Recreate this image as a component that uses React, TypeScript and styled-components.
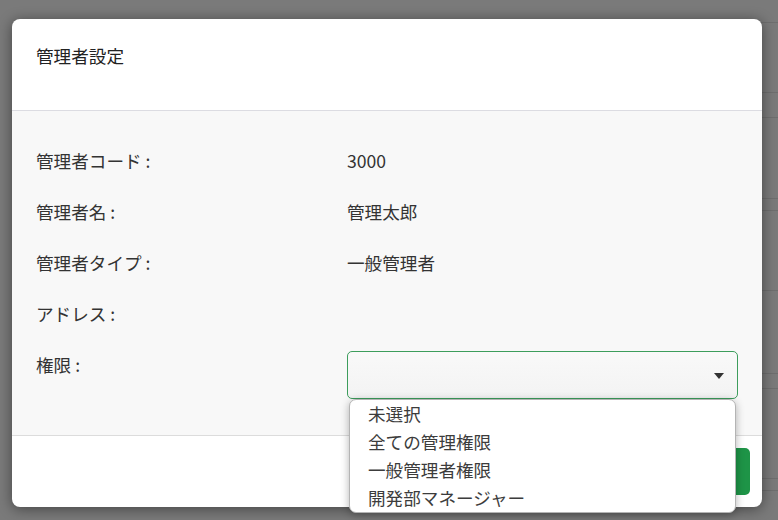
import * as React from "react";
import styled, { createGlobalStyle } from "styled-components";

const GlobalStyle = createGlobalStyle`
  html, body {
    margin: 0;
    padding: 0;
    background: #7a7a7a;
  }
  body {
    font-family: "Noto Sans CJK JP", "Noto Sans", sans-serif;
    color: #333;
  }
`;

const Backdrop = styled.div`
  position: relative;
  width: 778px;
  height: 520px;
  overflow: hidden;
  background: #7a7a7a;
  padding: 19px 16px 0 12px;
  box-sizing: border-box;
`;

// faint table rows of the page behind the overlay
const PageLine = styled.div<{ top: number }>`
  position: absolute;
  left: 700px;
  right: 0;
  top: ${({ top }) => top}px;
  height: 1px;
  background: #6e6e6e;
`;

const Modal = styled.div`
  position: relative;
  width: 750px;
  border-radius: 8px;
  background: #fff;
  box-shadow: 0 2px 14px rgba(0, 0, 0, 0.45);
`;

const Header = styled.div`
  height: 92px;
  padding: 26px 24px 0;
  box-sizing: border-box;
  border-bottom: 1px solid #dcdce2;
  border-radius: 8px 8px 0 0;
  font-size: 17.6px;
  line-height: 22px;
  color: #222;
`;

const Body = styled.div`
  background: #f8f8f8;
  padding: 24px 24px 36px;
  border-bottom: 1px solid #dcdcdc;
`;

const Row = styled.div`
  display: grid;
  grid-template-columns: 311px 1fr;
  align-items: start;
`;

const Label = styled.div`
  font-size: 17.6px;
  line-height: 51px;
  color: #333;
  white-space: pre;
`;

const Value = styled.div`
  font-size: 17.6px;
  line-height: 51px;
  color: #333;
`;

const SelectWrap = styled.div`
  position: relative;
  margin-top: 12px;
`;

const SelectBox = styled.div`
  height: 48px;
  box-sizing: border-box;
  border: 1px solid #3d9d5c;
  border-radius: 5px;
  background: linear-gradient(#f9f9f9, #f3f3f3);
  display: flex;
  align-items: center;
  justify-content: flex-end;
  padding-right: 13px;
`;

const Caret = styled.span`
  width: 0;
  height: 0;
  margin-top: 2px;
  border-left: 5px solid transparent;
  border-right: 5px solid transparent;
  border-top: 6px solid #333;
`;

const Options = styled.ul`
  position: absolute;
  z-index: 2;
  top: 48px;
  left: 2px;
  right: 2px;
  margin: 0;
  padding: 0;
  list-style: none;
  background: #fff;
  border: 1px solid #b4b4b4;
  border-radius: 7px;
  box-shadow: 0 2px 8px rgba(0, 0, 0, 0.3);
`;

const Option = styled.li`
  height: 28px;
  line-height: 28px;
  padding-left: 18px;
  font-size: 17.6px;
  color: #3c3c3c;
`;

const Footer = styled.div`
  height: 71px;
  padding: 12px;
  box-sizing: border-box;
  display: flex;
  justify-content: flex-end;
  border-radius: 0 0 8px 8px;
`;

const SaveButton = styled.button`
  width: 96px;
  height: 47px;
  border: none;
  border-radius: 5px;
  background: #1e9447;
  color: #fff;
  font-family: inherit;
  font-size: 16px;
`;

const fields = [
  { label: "管理者コード :", value: "3000" },
  { label: "管理者名 :", value: "管理太郎" },
  { label: "管理者タイプ :", value: "一般管理者" },
  { label: "アドレス :", value: "" },
];

const roles = ["未選択", "全ての管理権限", "一般管理者権限", "開発部マネージャー"];

const lines = [22, 92, 117, 198, 210, 290, 373, 388, 478, 490];

export default function App() {
  return (
    <>
      <GlobalStyle />
      <Backdrop>
        {lines.map((top) => (
          <PageLine key={top} top={top} />
        ))}
        <Modal>
          <Header>管理者設定</Header>
          <Body>
            {fields.map((f) => (
              <Row key={f.label}>
                <Label>{f.label}</Label>
                <Value>{f.value}</Value>
              </Row>
            ))}
            <Row>
              <Label>権限 :</Label>
              <SelectWrap>
                <SelectBox>
                  <Caret />
                </SelectBox>
                <Options>
                  {roles.map((r) => (
                    <Option key={r}>{r}</Option>
                  ))}
                </Options>
              </SelectWrap>
            </Row>
          </Body>
          <Footer>
            <SaveButton>保存</SaveButton>
          </Footer>
        </Modal>
      </Backdrop>
    </>
  );
}
